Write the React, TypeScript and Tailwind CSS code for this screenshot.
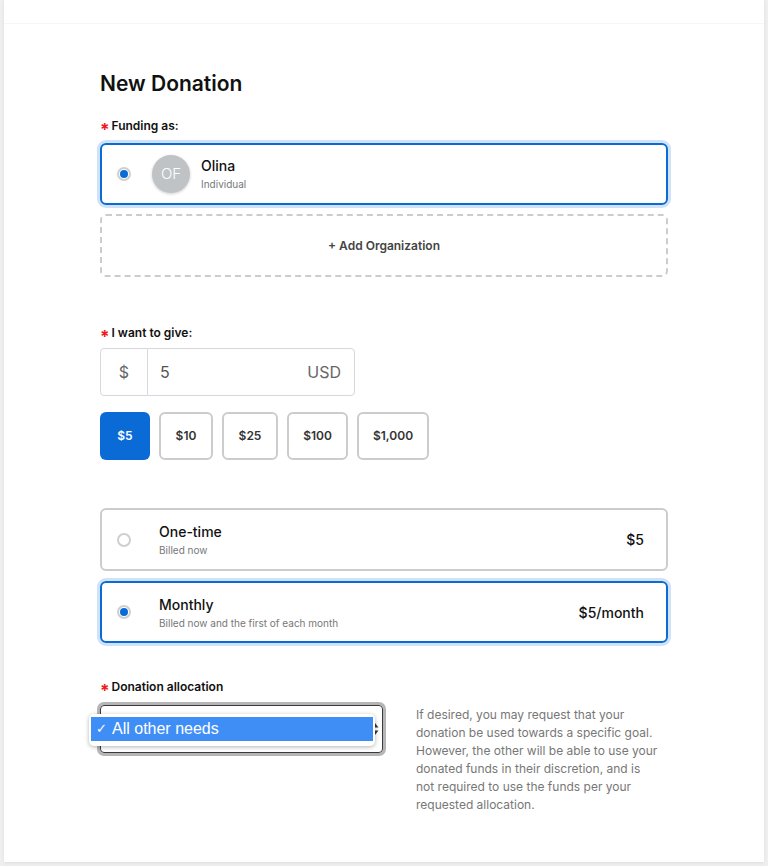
import React from "react";

const font = { fontFamily: "Inter, 'Open Sans', sans-serif" };

function Label({ children }: { children: React.ReactNode }) {
  return (
    <div className="h-[16px] flex items-center text-[12px] leading-[16px] font-semibold text-[#111]">
      <span className="inline-block text-[#f01818] text-[17px] leading-[16px] font-bold mr-[2px] translate-y-[4px]">*</span>
      {children}
    </div>
  );
}

function Radio({ checked }: { checked: boolean }) {
  return (
    <span className="w-[14px] h-[14px] rounded-full border-2 border-[#cfcfcf] bg-white flex items-center justify-center shrink-0">
      {checked && <span className="w-[8px] h-[8px] rounded-full bg-[#0b6bd6]" />}
    </span>
  );
}

function PlanCard({
  checked,
  title,
  sub,
  price,
}: {
  checked: boolean;
  title: string;
  sub: string;
  price: string;
}) {
  return (
    <div
      className={
        checked
          ? "h-[62px] rounded-[6px] border-2 border-[#0b6bd6] shadow-[0_0_0_3px_#cfe2f7] flex items-center pl-[15px] pr-[22px]"
          : "h-[63px] rounded-[6px] border-2 border-[#cccccc] flex items-center pl-[15px] pr-[22px]"
      }
    >
      <Radio checked={checked} />
      <div className="ml-[28px] flex flex-col">
        <span className="text-[14px] leading-[20px] font-medium text-[#111]">{title}</span>
        <span className="text-[10px] leading-[14px] text-[#777] mt-[1px]">{sub}</span>
      </div>
      <span className="ml-auto text-[14px] font-medium text-[#111]">{price}</span>
    </div>
  );
}

const amounts = [
  { v: "$5", w: "w-[50px]", on: true },
  { v: "$10", w: "w-[54px]", on: false },
  { v: "$25", w: "w-[56px]", on: false },
  { v: "$100", w: "w-[61px]", on: false },
  { v: "$1,000", w: "w-[72px]", on: false },
];

export default function App() {
  return (
    <div className="min-h-[866px] bg-[#efefef] pb-[4px]" style={font}>
      <div className="ml-[4px] w-[760px] min-h-[862px] bg-white shadow-[0_1px_3px_rgba(0,0,0,0.08)]">
        <div className="h-[24px] border-b border-[#f6f6f6]" />
        <div className="pl-[96px] w-[664px] pt-[46px]">
          <h1 className="text-[21px] leading-[28px] font-semibold text-[#111]">New Donation</h1>

          <div className="mt-[20px]">
            <Label>Funding as:</Label>
          </div>
          <div className="mt-[9px] h-[62px] rounded-[6px] border-2 border-[#0b6bd6] shadow-[0_0_0_3px_#cfe2f7] flex items-center pl-[15px]">
            <Radio checked />
            <div className="ml-[21px] w-[38px] h-[38px] rounded-full bg-[#c0c3c6] shadow-[0_1px_3px_rgba(0,0,0,0.2)] flex items-center justify-center text-white text-[15px] font-light">
              OF
            </div>
            <div className="ml-[11px] flex flex-col">
              <span className="text-[14px] leading-[18px] font-medium text-[#111]">Olina</span>
              <span className="text-[10px] leading-[14px] text-[#777] mt-[2px]">Individual</span>
            </div>
          </div>
          <div className="mt-[9px] h-[63px] rounded-[6px] border-2 border-dashed border-[#cccccc] flex items-center justify-center text-[12px] font-semibold text-[#444]">
            + Add Organization
          </div>

          <div className="mt-[48px]">
            <Label>I want to give:</Label>
          </div>
          <div className="mt-[7px] w-[255px] h-[48px] rounded-[4px] border border-[#d5d8dd] flex text-[16px] text-[#666]">
            <div className="w-[47px] border-r border-[#d5d8dd] flex items-center justify-center">$</div>
            <div className="flex-1 flex items-center pl-[12px] pr-[13px]">
              <span className="text-[#555]">5</span>
              <span className="ml-auto">USD</span>
            </div>
          </div>
          <div className="mt-[16px] flex gap-[9px]">
            {amounts.map((a) => (
              <div
                key={a.v}
                className={
                  a.on
                    ? `${a.w} h-[48px] rounded-[6px] bg-[#0b6bd6] text-white flex items-center justify-center text-[12px] font-semibold`
                    : `${a.w} h-[48px] rounded-[6px] border-2 border-[#cccccc] text-[#333] flex items-center justify-center text-[12px] font-semibold`
                }
              >
                {a.v}
              </div>
            ))}
          </div>

          <div className="mt-[48px] flex flex-col gap-[10px]">
            <PlanCard checked={false} title="One-time" sub="Billed now" price="$5" />
            <PlanCard
              checked
              title="Monthly"
              sub="Billed now and the first of each month"
              price="$5/month"
            />
          </div>

          <div className="mt-[36px]">
            <Label>Donation allocation</Label>
          </div>
          <div className="mt-[7px] flex">
            <div className="relative -ml-[3px] w-[289px] h-[54px] rounded-[7px] border-[3px] border-[#b5b5b5] shrink-0">
              <div className="h-full rounded-[4px] border border-[#3a3a3a] bg-white flex items-center justify-end pr-[3px]">
                <svg width="8" height="14" viewBox="0 0 8 14">
                  <path d="M4 1 L7.5 5.5 H0.5 Z" fill="#333" />
                  <path d="M4 13 L7.5 8.5 H0.5 Z" fill="#333" />
                </svg>
              </div>
              <div className="absolute left-[-11px] top-[9px] w-[286px] h-[32px] rounded-[5px] bg-white shadow-[0_1px_4px_rgba(0,0,0,0.3)] px-[2px] py-[3px]">
                <div
                  className="h-[24px] bg-[#3f8ef6] text-white text-[16px] flex items-center pl-[5px]"
                  style={{ fontFamily: "'Liberation Sans', Arial, sans-serif" }}
                >
                  <span className="text-[13px] mr-[5px]">✓</span>
                  All other needs
                </div>
              </div>
            </div>
            <p className="ml-[30px] pt-[4px] text-[12px] leading-[18px] text-[#777]">
              If desired, you may request that your
              <br />
              donation be used towards a specific goal.
              <br />
              However, the other will be able to use your
              <br />
              donated funds in their discretion, and is
              <br />
              not required to use the funds per your
              <br />
              requested allocation.
            </p>
          </div>
        </div>
      </div>
    </div>
  );
}
